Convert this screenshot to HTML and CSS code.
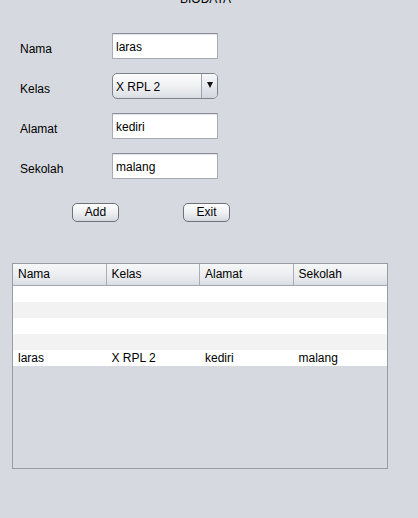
FILE: index.html
```html
<!DOCTYPE html>
<html>
<head>
<meta charset="utf-8">
<link rel="stylesheet" href="styles.css">
</head>
<body>
<div class="window">
  <div class="title">BIODATA</div>
  <div class="form">
    <div class="lbl">Nama</div>
    <div class="field">laras</div>
    <div class="lbl">Kelas</div>
    <div class="combo"><span class="combo-text">X RPL 2</span><span class="combo-btn"><span class="tri"></span></span></div>
    <div class="lbl">Alamat</div>
    <div class="field">kediri</div>
    <div class="lbl">Sekolah</div>
    <div class="field">malang</div>
  </div>
  <div class="buttons">
    <button class="btn">Add</button>
    <button class="btn">Exit</button>
  </div>
  <div class="scroll">
    <div class="thead">
      <div class="th">Nama</div>
      <div class="th">Kelas</div>
      <div class="th">Alamat</div>
      <div class="th last">Sekolah</div>
    </div>
    <div class="row"><div class="td"></div><div class="td"></div><div class="td"></div><div class="td"></div></div>
    <div class="row alt"><div class="td"></div><div class="td"></div><div class="td"></div><div class="td"></div></div>
    <div class="row"><div class="td"></div><div class="td"></div><div class="td"></div><div class="td"></div></div>
    <div class="row alt"><div class="td"></div><div class="td"></div><div class="td"></div><div class="td"></div></div>
    <div class="row"><div class="td">laras</div><div class="td">X RPL 2</div><div class="td">kediri</div><div class="td">malang</div></div>
  </div>
</div>
</body>
</html>
```

FILE: styles.css
```css
html, body {
  margin: 0;
  padding: 0;
  background: #d6d9df;
  overflow: hidden;
}
body {
  font-family: "Liberation Sans", Arial, sans-serif;
  font-size: 12px;
  color: #000;
}
.window {
  width: 418px;
  height: 518px;
}
.title {
  margin-top: -8px;
  padding-left: 180px;
  line-height: 14px;
  height: 14px;
}
.form {
  margin-top: 27px;
  padding-left: 20px;
  display: grid;
  grid-template-columns: 92px 106px;
  grid-auto-rows: 26px;
  row-gap: 14px;
}
.lbl {
  line-height: 32px;
  height: 26px;
  overflow: visible;
}
.field {
  box-sizing: border-box;
  height: 26px;
  background: #fff;
  border: 1px solid #a7abb2;
  border-top-color: #8c9097;
  box-shadow: inset 0 1px 0 #e2e4e8;
  padding: 2px 3px 0;
  line-height: 22px;
}
.combo {
  box-sizing: border-box;
  height: 26px;
  display: flex;
  border: 1px solid #7d828b;
  border-radius: 5px;
  background: linear-gradient(#fdfdfe 0%, #f1f2f4 45%, #e3e6ea 80%, #d9dce1 100%);
  overflow: hidden;
}
.combo-text {
  flex: 1;
  padding: 2px 3px 0;
  line-height: 22px;
}
.combo-btn {
  width: 15px;
  border-left: 1px solid #9ea3ab;
  background: linear-gradient(#f7f8fa 0%, #e6e9ee 50%, #d2d6dd 100%);
  display: flex;
  align-items: center;
  justify-content: center;
}
.tri {
  width: 0;
  height: 0;
  border-left: 3px solid transparent;
  border-right: 3px solid transparent;
  border-top: 6px solid #111;
  margin-top: -2px;
}
.buttons {
  margin-top: 24px;
  padding-left: 72px;
  display: flex;
  gap: 64px;
}
.btn {
  box-sizing: border-box;
  width: 47px;
  height: 19px;
  margin: 0;
  padding: 0;
  font-family: "Liberation Sans", Arial, sans-serif;
  font-size: 12px;
  color: #000;
  line-height: 17px;
  border: 1px solid #6e737b;
  border-radius: 5px;
  background: linear-gradient(#fdfdfd 0%, #f1f2f4 45%, #e0e3e7 80%, #d3d6dc 100%);
}
.scroll {
  margin-top: 41px;
  margin-left: 12px;
  box-sizing: border-box;
  width: 376px;
  height: 206px;
  border: 1px solid #979ca5;
}
.thead {
  display: grid;
  grid-template-columns: repeat(4, 1fr);
  height: 22px;
  box-sizing: border-box;
  border-bottom: 1px solid #a2a6ad;
  background: linear-gradient(#f6f7f8 0%, #eceef1 50%, #e1e4e8 85%, #d8dbe0 100%);
}
.th {
  border-right: 1px solid #a9adb4;
  padding-left: 5px;
  line-height: 21px;
}
.th.last {
  border-right: 0;
}
.row {
  display: grid;
  grid-template-columns: repeat(4, 1fr);
  height: 16px;
  background: #fff;
}
.row.alt {
  background: #f2f2f2;
}
.td {
  padding-left: 5px;
  line-height: 16px;
}
```
